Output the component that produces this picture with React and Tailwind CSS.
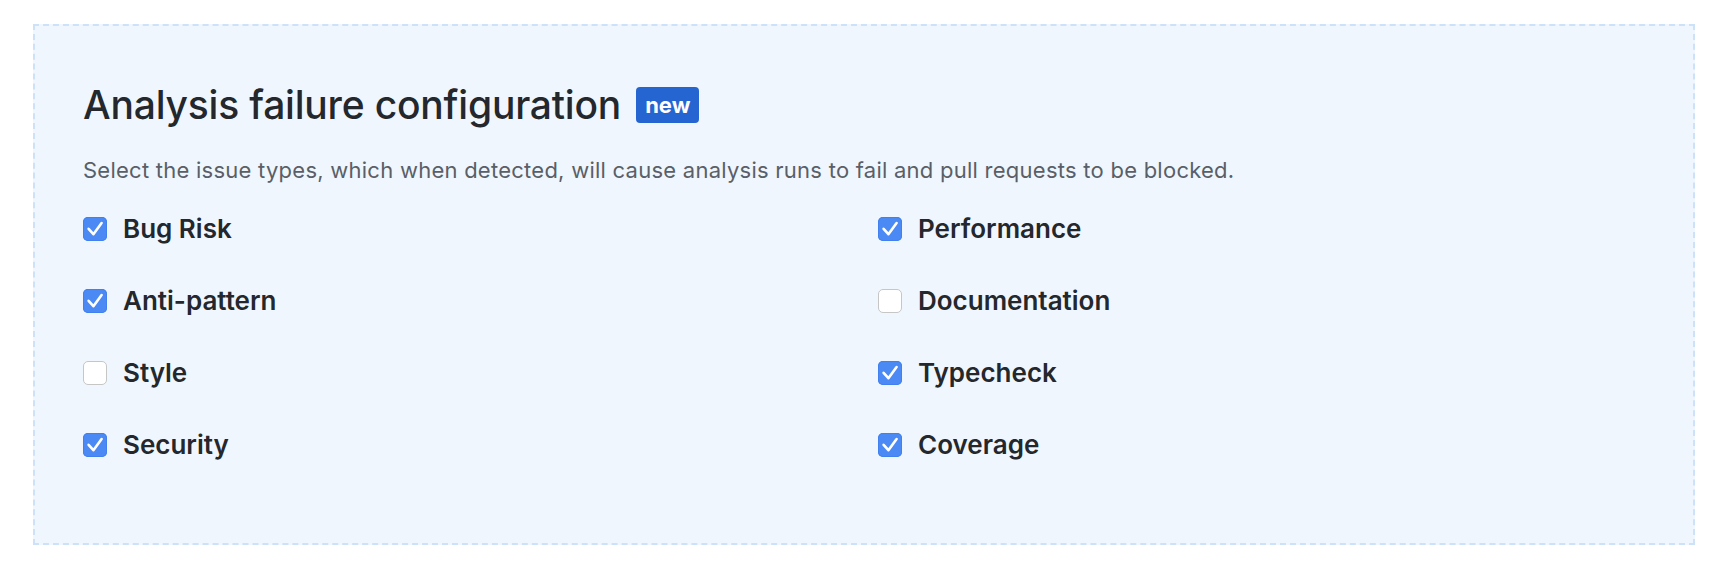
import { useState } from "react";

const issueTypes = [
  { id: "bug-risk", label: "Bug Risk", checked: true },
  { id: "performance", label: "Performance", checked: true },
  { id: "anti-pattern", label: "Anti-pattern", checked: true },
  { id: "documentation", label: "Documentation", checked: false },
  { id: "style", label: "Style", checked: false },
  { id: "typecheck", label: "Typecheck", checked: true },
  { id: "security", label: "Security", checked: true },
  { id: "coverage", label: "Coverage", checked: true },
];

const Checkbox = ({ checked, onChange }) => (
  <button
    type="button"
    onClick={onChange}
    className={`w-6 h-6 shrink-0 rounded-[5px] flex items-center justify-center ${
      checked
        ? "bg-[#4b8af4] shadow-[inset_0_0_0_1px_#4180ee]"
        : "bg-white border border-[#c6c6c6]"
    }`}
  >
    {checked && (
      <svg width="24" height="24" viewBox="0 0 24 24" fill="none">
        <path
          d="M5.6 11.8 L10.4 17.2 L18.6 6"
          stroke="white"
          strokeWidth="2.6"
          strokeLinecap="round"
          strokeLinejoin="round"
        />
      </svg>
    )}
  </button>
);

const App = () => {
  const [types, setTypes] = useState(issueTypes);

  const toggle = (id) => {
    setTypes((prev) =>
      prev.map((t) => (t.id === id ? { ...t, checked: !t.checked } : t))
    );
  };

  return (
    <div className="bg-white min-h-[572px] pl-[33px] pr-[31px] pt-6 font-['Inter',sans-serif]">
      <div className="bg-[#eff6fe] border-2 border-dashed border-[#cde1f8] pl-[48px] pr-[48px] pt-[55px] pb-[82px]">
        <div className="flex items-center gap-[15px]">
          <h2 className="text-[39px] leading-[48px] font-medium text-[#24272c] tracking-[-0.2px]">
            Analysis failure configuration
          </h2>
          <span className="bg-[#2565d1] text-white text-[22px] leading-[36px] font-bold px-[9px] rounded-[4px]">
            new
          </span>
        </div>

        <p className="mt-[26px] text-[22px] leading-[30px] text-[#5a5f67] tracking-[0.25px]">
          Select the issue types, which when detected, will cause analysis runs
          to fail and pull requests to be blocked.
        </p>

        <div className="mt-[28px] grid grid-cols-2 gap-x-7 gap-y-10">
          {types.map((t) => (
            <label
              key={t.id}
              className="flex items-center gap-4 cursor-pointer"
            >
              <Checkbox checked={t.checked} onChange={() => toggle(t.id)} />
              <span className="text-[26px] leading-[32px] font-semibold text-[#24272c]">
                {t.label}
              </span>
            </label>
          ))}
        </div>
      </div>
    </div>
  );
};

export default App;
